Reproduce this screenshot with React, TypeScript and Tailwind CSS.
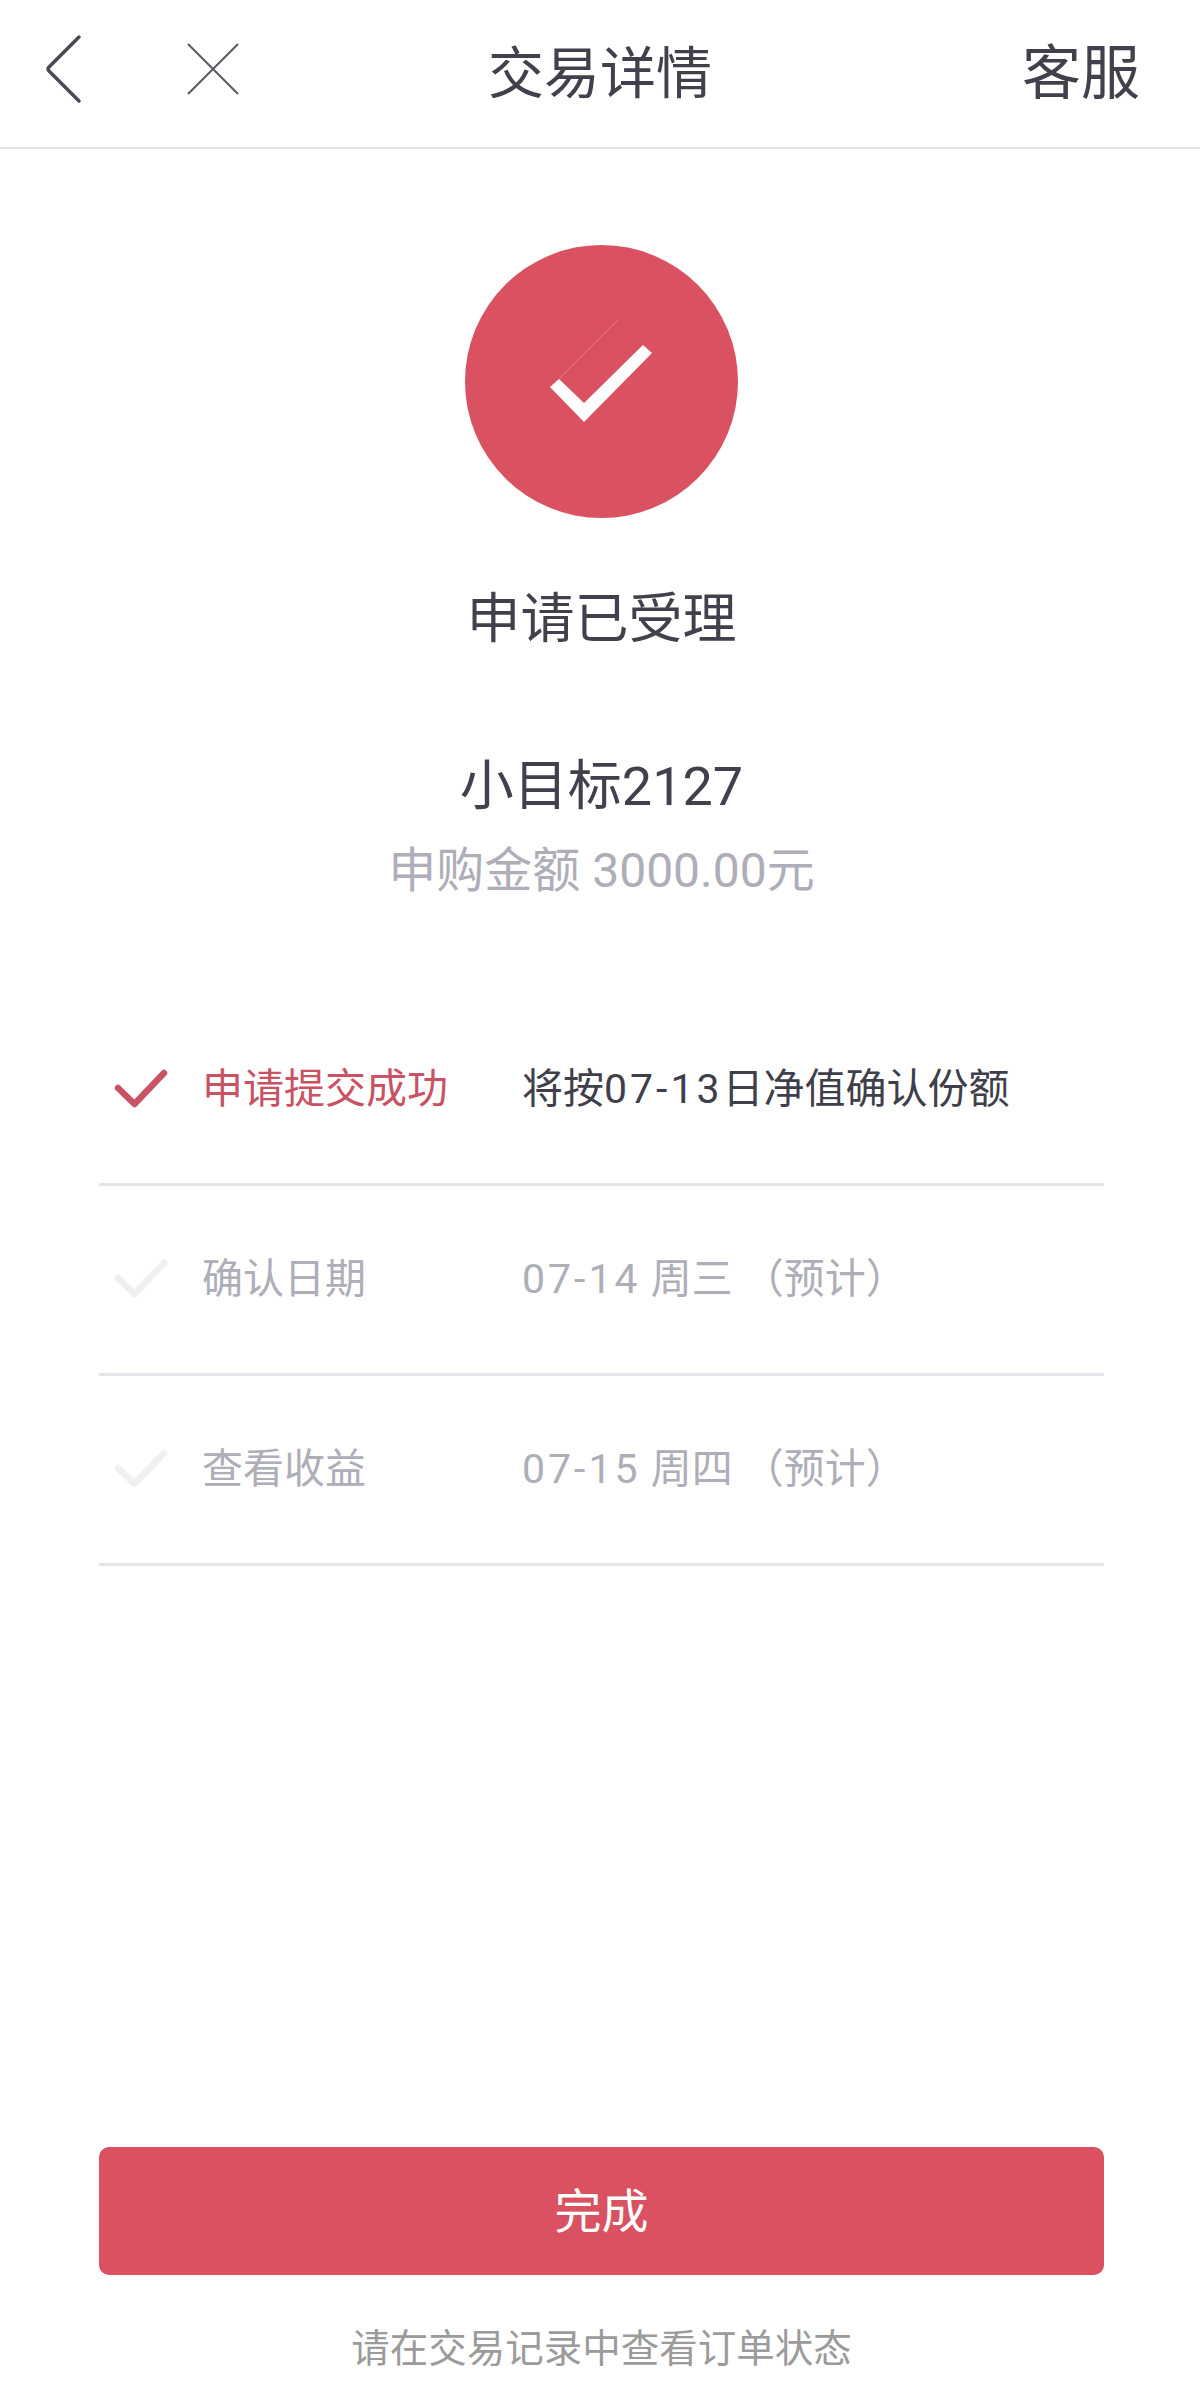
import React from 'react';

const SANS = "font-['Roboto','Noto_Sans_CJK_SC',sans-serif]";

interface StepProps {
  label: string;
  detail: React.ReactNode;
  done?: boolean;
}

const Num: React.FC<{ children: React.ReactNode }> = ({ children }) => (
  <span className="tracking-[3px]">{children}</span>
);

const Tick: React.FC<{ color: string }> = ({ color }) => (
  <svg width="60" height="46" viewBox="0 0 60 46" fill="none" className="shrink-0">
    <path d="M8 22 L24.5 38 L54 7" stroke={color} strokeWidth="6.5" strokeLinecap="round" strokeLinejoin="round" />
  </svg>
);

const Step: React.FC<StepProps> = ({ label, detail, done }) => (
  <div className="h-[190px] pb-[2px] flex items-center border-b-[3px] border-[#e4e4ea]">
    <div className="w-[103px] pl-[11px] shrink-0">
      <Tick color={done ? '#c95264' : '#f0f0f2'} />
    </div>
    <div className={`w-[320px] shrink-0 text-[41px] leading-[50px] ${done ? 'text-[#c95264]' : 'text-[#aeaeb9]'}`}>{label}</div>
    <div className={`text-[41px] leading-[50px] whitespace-nowrap ${done ? 'text-[#3f3f4b]' : 'text-[#aeaeb9]'}`}>{detail}</div>
  </div>
);

export default function App() {
  return (
    <div className={`w-[1200px] h-[2383px] overflow-hidden bg-white flex flex-col ${SANS}`}>
      <header className="h-[149px] shrink-0 border-b-2 border-[#e3e3e3] flex items-center justify-between relative">
        <div className="flex items-center pl-[44px] pb-[9px] gap-[102px]">
          <svg width="40" height="70" viewBox="0 0 40 70" fill="none">
            <path d="M35 3 L5 33 Q3 35 5 37 L35 67" stroke="#4a4a55" strokeWidth="3.5" strokeLinecap="round" />
          </svg>
          <svg width="54" height="54" viewBox="0 0 54 54" fill="none">
            <path d="M2 2 L52 52 M52 2 L2 52" stroke="#5a5a65" strokeWidth="2" />
          </svg>
        </div>
        <div className="absolute left-0 right-0 text-center text-[56px] leading-[70px] text-[#41414d]">交易详情</div>
        <div className="pr-[60px] text-[59px] leading-[70px] text-[#41414d]">客服</div>
      </header>

      <main className="flex-1 flex flex-col items-center pl-[3px]">
        <div className="mt-[96px] w-[273px] h-[273px] rounded-full bg-[#da5261] flex items-center justify-center shrink-0">
          <svg width="273" height="273" viewBox="0 0 273 273" fill="none">
            <path d="M94 134 L153 75" stroke="#e87b86" strokeWidth="1" />
            <path d="M85 142 L94 134 L119 158 L178 100 L187 108 L119 177 Z" fill="#ffffff" />
          </svg>
        </div>
        <div className="mt-[67px] text-[54px] leading-[70px] text-[#41414d]">申请已受理</div>
        <div className="mt-[97px] text-[54px] leading-[70px] text-[#41414d]">小目标2127</div>
        <div className="mt-[19px] text-[48px] leading-[60px] text-[#aeaeb9]">申购金额 3000.00元</div>

        <section className="mt-[95px] w-[1005px]">
          <Step label="申请提交成功" detail={<>将按<Num>07-13</Num>日净值确认份额</>} done />
          <Step label="确认日期" detail={<><Num>07-14</Num> 周三 （预计）</>} />
          <Step label="查看收益" detail={<><Num>07-15</Num> 周四 （预计）</>} />
        </section>

        <button className="mt-[581px] w-[1005px] h-[128px] pt-[3px] shrink-0 rounded-[10px] bg-[#da5261] text-white text-[47px]">完成</button>
        <div className="mt-[49px] h-[44px] overflow-hidden text-[38.5px] leading-[50px] text-[#9b9b9b]">请在交易记录中查看订单状态</div>
      </main>
    </div>
  );
}
